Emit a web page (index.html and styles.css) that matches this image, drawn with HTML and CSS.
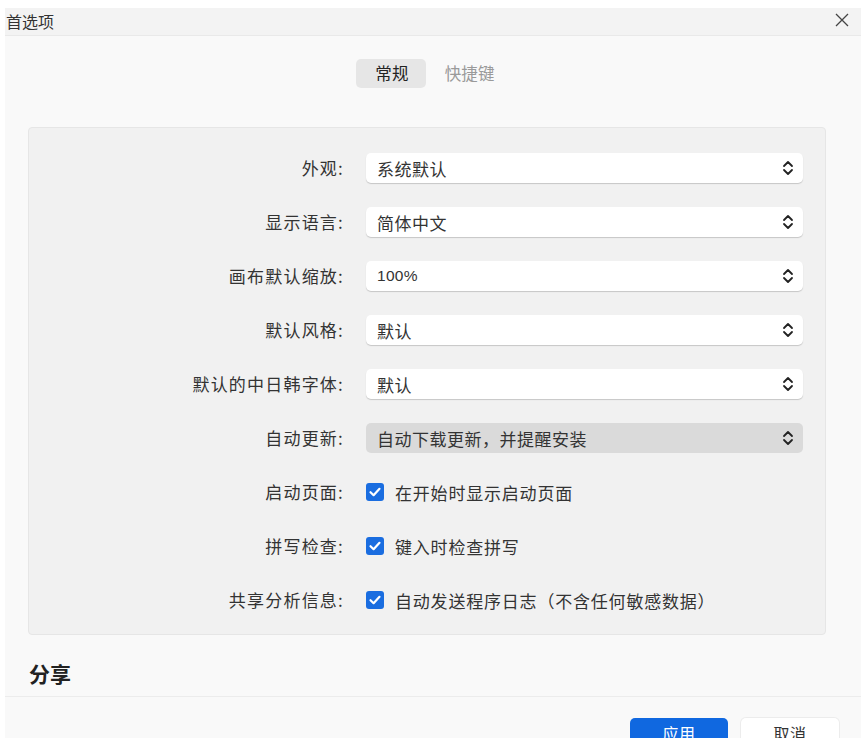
FILE: index.html
```html
<!DOCTYPE html>
<html lang="zh-CN">
<head>
<meta charset="utf-8">
<title>首选项</title>
<link rel="stylesheet" href="styles.css">
</head>
<body>
<div class="dialog">
  <div class="titlebar">
    <span class="title">首选项</span>
    <svg class="close" width="16" height="16" viewBox="0 0 16 16"><path d="M2 2L14 14M14 2L2 14" stroke="#444" stroke-width="1.3" fill="none"/></svg>
  </div>
  <div class="content">
    <div class="tabs">
      <span class="tab active">常规</span>
      <span class="tab">快捷键</span>
    </div>
    <div class="panel">
      <div class="label">外观:</div>
      <div class="select"><span>系统默认</span><svg class="chev" width="12" height="20" viewBox="0 0 12 20"><path d="M2 8L6 4L10 8M2 12L6 16L10 12" stroke="#222" stroke-width="1.8" fill="none" stroke-linecap="round" stroke-linejoin="round"/></svg></div>

      <div class="label">显示语言:</div>
      <div class="select"><span>简体中文</span><svg class="chev" width="12" height="20" viewBox="0 0 12 20"><path d="M2 8L6 4L10 8M2 12L6 16L10 12" stroke="#222" stroke-width="1.8" fill="none" stroke-linecap="round" stroke-linejoin="round"/></svg></div>

      <div class="label">画布默认缩放:</div>
      <div class="select"><span class="latin">100%</span><svg class="chev" width="12" height="20" viewBox="0 0 12 20"><path d="M2 8L6 4L10 8M2 12L6 16L10 12" stroke="#222" stroke-width="1.8" fill="none" stroke-linecap="round" stroke-linejoin="round"/></svg></div>

      <div class="label">默认风格:</div>
      <div class="select"><span>默认</span><svg class="chev" width="12" height="20" viewBox="0 0 12 20"><path d="M2 8L6 4L10 8M2 12L6 16L10 12" stroke="#222" stroke-width="1.8" fill="none" stroke-linecap="round" stroke-linejoin="round"/></svg></div>

      <div class="label">默认的中日韩字体:</div>
      <div class="select"><span>默认</span><svg class="chev" width="12" height="20" viewBox="0 0 12 20"><path d="M2 8L6 4L10 8M2 12L6 16L10 12" stroke="#222" stroke-width="1.8" fill="none" stroke-linecap="round" stroke-linejoin="round"/></svg></div>

      <div class="label">自动更新:</div>
      <div class="select disabled"><span>自动下载更新，并提醒安装</span><svg class="chev" width="12" height="20" viewBox="0 0 12 20"><path d="M2 8L6 4L10 8M2 12L6 16L10 12" stroke="#222" stroke-width="1.8" fill="none" stroke-linecap="round" stroke-linejoin="round"/></svg></div>

      <div class="label">启动页面:</div>
      <div class="check"><span class="box"><svg width="18" height="18" viewBox="0 0 18 18"><path d="M4.5 9.2L7.6 12.2L13.5 5.8" stroke="#fff" stroke-width="2.2" fill="none" stroke-linecap="round" stroke-linejoin="round"/></svg></span><span>在开始时显示启动页面</span></div>

      <div class="label">拼写检查:</div>
      <div class="check"><span class="box"><svg width="18" height="18" viewBox="0 0 18 18"><path d="M4.5 9.2L7.6 12.2L13.5 5.8" stroke="#fff" stroke-width="2.2" fill="none" stroke-linecap="round" stroke-linejoin="round"/></svg></span><span>键入时检查拼写</span></div>

      <div class="label">共享分析信息:</div>
      <div class="check"><span class="box"><svg width="18" height="18" viewBox="0 0 18 18"><path d="M4.5 9.2L7.6 12.2L13.5 5.8" stroke="#fff" stroke-width="2.2" fill="none" stroke-linecap="round" stroke-linejoin="round"/></svg></span><span>自动发送程序日志（不含任何敏感数据）</span></div>
    </div>
    <h2 class="section">分享</h2>
  </div>
  <div class="footer">
    <button class="btn primary">应用</button>
    <button class="btn">取消</button>
  </div>
</div>
</body>
</html>
```
FILE: styles.css
```css
html, body {
  margin: 0;
  padding: 0;
  background: #ffffff;
  font-family: "Noto Sans CJK SC", "Noto Sans", sans-serif;
  color: #333;
}
.dialog {
  margin: 8px 0 0 5px;
  width: 856px;
  height: 730px;
  background: #f9f9f9;
  display: flex;
  flex-direction: column;
  overflow: hidden;
}
.titlebar {
  height: 27px;
  flex: none;
  background: #f3f3f3;
  border-bottom: 1px solid #e9e9e9;
  display: flex;
  align-items: center;
  justify-content: space-between;
  padding: 0 11px 0 1px;
}
.title {
  font-size: 16px;
  color: #333;
  line-height: 1;
  margin-top: -2px;
}
.close {
  margin-top: -3px;
}
.content {
  height: 660px;
  flex: none;
  border-bottom: 1px solid #ececec;
  display: flex;
  flex-direction: column;
}
.tabs {
  display: flex;
  justify-content: center;
  margin-top: 23px;
  margin-left: 2px;
}
.tab {
  height: 29px;
  line-height: 29px;
  padding: 0 17px 0 19px;
  font-size: 16.5px;
  letter-spacing: 0.2px;
  color: #9a9a9a;
  border-radius: 5px;
}
.tab.active {
  background: #e6e6e6;
  color: #222;
}
.panel {
  margin: 39px 35px 0 23px;
  height: 508px;
  box-sizing: border-box;
  background: #f1f1f1;
  border: 1px solid #e6e6e6;
  border-radius: 4px;
  display: grid;
  grid-template-columns: 317px 1fr;
  column-gap: 20px;
  row-gap: 24px;
  grid-auto-rows: 30px;
  padding: 25px 22px 0 0;
}
.label {
  font-size: 17px;
  letter-spacing: 1.2px;
  text-align: right;
  line-height: 30px;
  color: #333;
  padding-right: 2px;
}
.select {
  background: #fff;
  border-radius: 5px;
  box-shadow: 0 1px 1px rgba(0, 0, 0, 0.18);
  display: flex;
  align-items: center;
  justify-content: space-between;
  padding: 0 9px 0 11px;
  font-size: 17px;
  letter-spacing: 0.5px;
  color: #333;
}
.select .latin {
  font-family: "Liberation Sans", "Noto Sans", sans-serif;
  font-size: 15.5px;
  letter-spacing: 0.3px;
}
.select.disabled {
  background: #dadada;
  box-shadow: none;
}
.chev {
  flex: none;
}
.check {
  display: flex;
  align-items: center;
  gap: 11px;
  font-size: 17px;
  letter-spacing: 0.8px;
  color: #333;
}
.box {
  width: 18px;
  height: 18px;
  border-radius: 3px;
  background: #1a6de0;
  display: flex;
  flex: none;
}
.section {
  margin: 22px 0 0 24px;
  font-size: 21px;
  font-weight: 700;
  color: #222;
  line-height: 32px;
}
.footer {
  flex: 1;
  display: flex;
  justify-content: flex-end;
  align-items: flex-start;
  gap: 13px;
  padding: 21px 22px 0 0;
  background: #f9f9f9;
}
.btn {
  width: 98px;
  height: 30px;
  border-radius: 5px;
  border: none;
  font-family: "Noto Sans CJK SC", sans-serif;
  font-size: 16px;
  line-height: 20px;
  letter-spacing: 0.6px;
  padding: 0;
  background: #fff;
  color: #333;
  box-shadow: 0 0 0 1px #ececec;
}
.btn.primary {
  background: #1068e0;
  color: #fff;
  box-shadow: none;
}
```
